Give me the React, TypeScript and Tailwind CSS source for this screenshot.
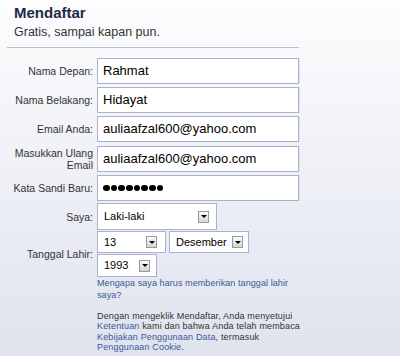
import React from 'react';

const font = { fontFamily: '"Liberation Sans", Arial, sans-serif' };

function Label({ children }: { children: React.ReactNode }) {
  return (
    <div className="w-[93px] shrink-0 text-right text-[10.5px] leading-[12px] text-[#333]">
      {children}
    </div>
  );
}

function TextBox({ children }: { children: React.ReactNode }) {
  return (
    <div className="ml-[4px] flex h-[26px] w-[202px] items-center border border-[#a9b3cd] bg-white pl-[5px] text-[13px] text-black shadow-[1px_0_0_#dfe3ee]">
      {children}
    </div>
  );
}

function Arrow() {
  return (
    <div className="flex h-[12px] w-[11px] items-center justify-center border border-[#9a9a9a] bg-gradient-to-b from-[#fafafa] to-[#d6d6d6]">
      <div className="h-0 w-0 border-x-[3px] border-t-[3px] border-x-transparent border-t-black" />
    </div>
  );
}

function Select({ value, w, h, pr }: { value: string; w: string; h: string; pr: string }) {
  return (
    <div className={`flex items-center justify-between border border-[#a9b3cd] bg-white pl-[6px] text-[11px] text-black ${w} ${h} ${pr}`}>
      <span>{value}</span>
      <Arrow />
    </div>
  );
}

export default function App() {
  return (
    <div className="h-[356px] w-[400px] overflow-hidden bg-gradient-to-b from-[#fdfdfe] to-[#dfe3ee]" style={font}>
      <div className="px-[14px] pt-[4px]">
        <h1 className="text-[15px] font-bold leading-[18px] text-[#1c2a47]">Mendaftar</h1>
        <p className="mt-[2px] text-[12.5px] leading-[16px] text-[#333]">Gratis, sampai kapan pun.</p>
      </div>
      <div className="ml-[7px] mt-[7px] w-[292px] border-t border-[#b9c0d1]" />

      <div className="mt-[10px] flex flex-col">
        <div className="flex items-center">
          <Label>Nama Depan:</Label>
          <TextBox>Rahmat</TextBox>
        </div>
        <div className="mt-[3px] flex items-center">
          <Label>Nama Belakang:</Label>
          <TextBox>Hidayat</TextBox>
        </div>
        <div className="mt-[3px] flex items-center">
          <Label>Email Anda:</Label>
          <TextBox>auliaafzal600@yahoo.com</TextBox>
        </div>
        <div className="mt-[4px] flex items-center">
          <Label>
            Masukkan Ulang
            <br />
            Email
          </Label>
          <TextBox>auliaafzal600@yahoo.com</TextBox>
        </div>
        <div className="mt-[3px] flex items-center">
          <Label>Kata Sandi Baru:</Label>
          <TextBox>
            <div className="flex gap-[1.2px]">
              {[...Array(8)].map((_, i) => (
                <span key={i} className="block h-[6.5px] w-[6.5px] rounded-full bg-black" />
              ))}
            </div>
          </TextBox>
        </div>
        <div className="mt-[2px] flex items-center">
          <Label>Saya:</Label>
          <div className="ml-[4px]">
            <Select value="Laki-laki" w="w-[120px]" h="h-[27px]" pr="pr-[7px]" />
          </div>
        </div>
        <div className="mt-[1px] flex items-center">
          <Label>Tanggal Lahir:</Label>
          <div className="ml-[4px] flex flex-col gap-[1px]">
            <div className="flex gap-[3px]">
              <Select value="13" w="w-[69px]" h="h-[22px]" pr="pr-[8px]" />
              <Select value="Desember" w="w-[80px]" h="h-[22px]" pr="pr-[5px]" />
            </div>
            <Select value="1993" w="w-[60px]" h="h-[23px]" pr="pr-[6px]" />
          </div>
        </div>
      </div>

      <div className="ml-[97px] mt-[1px] text-[9px] leading-[11.5px] tracking-[0.08px] text-[#3b5998]">
        Mengapa saya harus memberikan tanggal lahir
        <br />
        saya?
      </div>

      <div className="ml-[97px] mt-[9.5px] whitespace-nowrap text-[9px] leading-[10.5px] tracking-[0.16px] text-[#333]">
        Dengan mengeklik Mendaftar, Anda menyetujui
        <br />
        <span className="text-[#3b5998]">Ketentuan</span> kami dan bahwa Anda telah membaca
        <br />
        <span className="text-[#3b5998]">Kebijakan Penggunaan Data</span>, termasuk
        <br />
        <span className="text-[#3b5998]">Penggunaan Cookie</span>.
      </div>
    </div>
  );
}
